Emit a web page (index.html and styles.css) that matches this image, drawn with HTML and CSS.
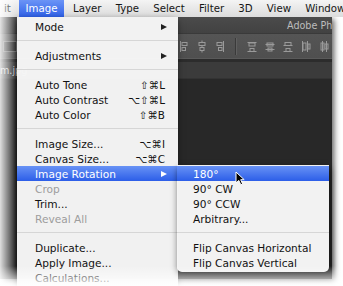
FILE: index.html
```html
<!DOCTYPE html>
<html>
<head>
<meta charset="utf-8">
<link rel="stylesheet" href="styles.css">
</head>
<body>
<div class="shot">
  <div class="menubar">
    <span class="mb-item mb-edit">it</span>
    <span class="mb-item mb-active">Image</span>
    <span class="mb-item">Layer</span>
    <span class="mb-item">Type</span>
    <span class="mb-item">Select</span>
    <span class="mb-item">Filter</span>
    <span class="mb-item">3D</span>
    <span class="mb-item">View</span>
    <span class="mb-item">Window</span>
  </div>
  <div class="app">
    <div class="titlebar"><span class="title">Adobe Photoshop CS6</span></div>
    <div class="options">
      <span class="optbox"></span>
      <div class="icons">
        <svg class="ic" viewBox="0 0 10 13"><path d="M1.5 1v11"/><rect x="3" y="2.5" width="5" height="3"/><rect x="3" y="7.5" width="3.5" height="3"/></svg>
        <svg class="ic" viewBox="0 0 10 13"><path d="M5 0.5v2M5 5.5v2M5 10.5v2"/><rect x="2" y="2.5" width="6" height="3"/><rect x="3" y="7.5" width="4" height="3"/></svg>
        <svg class="ic" viewBox="0 0 10 13"><path d="M8.5 1v11"/><rect x="2" y="2.5" width="5" height="3"/><rect x="3.5" y="7.5" width="3.5" height="3"/></svg>
        <span class="vsep"></span>
        <svg class="ic" viewBox="0 0 10 13"><path d="M0.5 2.5h9M0.5 11.5h9"/><rect x="2" y="3" width="6" height="3"/><rect x="3" y="8.5" width="4" height="3"/></svg>
        <svg class="ic" viewBox="0 0 10 13"><path d="M0.5 4.5h9M0.5 9.5h9"/><rect x="2" y="3" width="6" height="3"/><rect x="3" y="8" width="4" height="3"/></svg>
        <svg class="ic" viewBox="0 0 10 13"><path d="M0.5 5.5h9M0.5 11.5h9"/><rect x="2" y="2.5" width="6" height="3"/><rect x="3" y="8.5" width="4" height="3"/></svg>
        <svg class="ic" viewBox="0 0 10 13"><path d="M1.5 1v11M6.5 1v11"/><rect x="2" y="3" width="3" height="7"/><rect x="7" y="4" width="2" height="5"/></svg>
        <svg class="ic" viewBox="0 0 10 13"><path d="M3.5 1v11M7.5 1v11"/><rect x="2" y="3" width="3" height="7"/><rect x="6" y="4" width="3" height="5"/></svg>
      </div>
    </div>
    <div class="divider"></div>
    <div class="tabs"><span class="tab">m.jpg</span></div>
    <div class="canvas"></div>
  </div>

  <div class="menu">
    <div class="row"><span class="label">Mode</span><span class="arrow"></span></div>
    <div class="sep"></div>
    <div class="row"><span class="label">Adjustments</span><span class="arrow"></span></div>
    <div class="sep"></div>
    <div class="row"><span class="label">Auto Tone</span><span class="key">⇧⌘L</span></div>
    <div class="row"><span class="label">Auto Contrast</span><span class="key">⌥⇧⌘L</span></div>
    <div class="row"><span class="label">Auto Color</span><span class="key">⇧⌘B</span></div>
    <div class="sep"></div>
    <div class="row"><span class="label">Image Size...</span><span class="key">⌥⌘I</span></div>
    <div class="row"><span class="label">Canvas Size...</span><span class="key">⌥⌘C</span></div>
    <div class="row hl"><span class="label">Image Rotation</span><span class="arrow"></span></div>
    <div class="row dis"><span class="label">Crop</span></div>
    <div class="row"><span class="label">Trim...</span></div>
    <div class="row dis"><span class="label">Reveal All</span></div>
    <div class="sep"></div>
    <div class="row"><span class="label">Duplicate...</span></div>
    <div class="row"><span class="label">Apply Image...</span></div>
    <div class="row"><span class="label">Calculations...</span></div>
  </div>

  <div class="submenu">
    <div class="row sub hl"><span class="label">180°</span></div>
    <div class="row sub"><span class="label">90° CW</span></div>
    <div class="row sub"><span class="label">90° CCW</span></div>
    <div class="row sub"><span class="label">Arbitrary...</span></div>
    <div class="sep"></div>
    <div class="row sub"><span class="label">Flip Canvas Horizontal</span></div>
    <div class="row sub"><span class="label">Flip Canvas Vertical</span></div>
  </div>

  <svg class="cursor" viewBox="0 0 11 15"><path d="M1 1 L1 12 L3.8 9.4 L5.8 13.8 L7.6 13 L5.7 8.7 L9.2 8.7 Z"/></svg>

  <div class="fade-left"></div>
  <div class="fade-bottom"></div>
</div>
</body>
</html>
```

FILE: styles.css
```css
html, body {
  margin: 0;
  padding: 0;
  background: #ffffff;
}

.shot {
  position: relative;
  width: 343px;
  height: 286px;
  overflow: hidden;
  background: #ffffff;
  font-family: "DejaVu Sans", "Liberation Sans", sans-serif;
}

/* ---------- menu bar ---------- */
.menubar {
  display: flex;
  align-items: center;
  height: 17px;
  background: linear-gradient(#f4f4f4, #dcdcdc);
  font-size: 10.2px;
  color: #151515;
  white-space: nowrap;
  position: relative;
  z-index: 2;
}

.mb-item {
  flex-shrink: 0;
  display: flex;
  align-items: center;
  height: 17px;
  padding: 0 7.1px;
}

.mb-edit {
  width: 19px;
  box-sizing: border-box;
  padding: 0 0 0 4px;
}

.mb-active {
  width: 45px;
  box-sizing: border-box;
  justify-content: center;
  padding: 0;
  margin-right: 2px;
  color: #ffffff;
  background: linear-gradient(#6b94f6, #2f61e9);
}

/* ---------- dark application ---------- */
.app {
  width: 332px;
  height: 262px;
  display: flex;
  flex-direction: column;
  background: #292929;
  box-shadow: 2px 2px 6px rgba(0, 0, 0, 0.65);
  overflow: hidden;
}

.titlebar {
  height: 16px;
  display: flex;
  align-items: center;
  background: linear-gradient(#4b4b4b, #424242);
  border-bottom: 1px solid #3a3a3a;
}

.title {
  margin-left: 287px;
  font-size: 9.6px;
  color: #bdbdbd;
  white-space: nowrap;
}

.options {
  height: 24px;
  display: flex;
  align-items: center;
  background: linear-gradient(#555555, #4f4f4f);
}

.optbox {
  width: 12px;
  height: 9px;
  margin-left: 3px;
  border: 1px solid #777777;
  background: #3b3b3b;
}

.icons {
  display: flex;
  align-items: center;
  gap: 8px;
  margin-left: 162px;
}

.ic {
  width: 10px;
  height: 13px;
  fill: none;
  stroke: #9a9a9a;
  stroke-width: 1;
}

.vsep {
  width: 1px;
  height: 17px;
  background: #3a3a3a;
  border-right: 1px solid #606060;
  margin: 0 2px;
}

.divider {
  height: 3px;
  background: #2c2c2c;
  border-top: 1px solid #5a5a5a;
}

.tabs {
  height: 16px;
  display: flex;
  align-items: center;
  background: #3b3b3b;
  border-bottom: 1px solid #333333;
}

.tab {
  margin-left: 0;
  font-size: 9.6px;
  color: #cfcfcf;
  white-space: nowrap;
}

.canvas {
  flex: 1;
  background: #282828;
}

/* ---------- menus ---------- */
.menu {
  position: absolute;
  left: 17px;
  top: 17px;
  width: 161px;
  height: 272px;
  padding-top: 2px;
  box-sizing: border-box;
  background: rgba(246, 246, 246, 0.98);
  box-shadow: -1px 3px 7px rgba(0, 0, 0, 0.55);
  z-index: 3;
}

.submenu {
  position: absolute;
  left: 177px;
  top: 165px;
  width: 152px;
  padding: 1px 0 2px;
  background: rgba(245, 245, 245, 0.99);
  border-radius: 0 0 5px 5px;
  box-shadow: 1px 3px 7px rgba(0, 0, 0, 0.6);
  z-index: 4;
}

.row {
  display: flex;
  align-items: center;
  height: 15px;
  padding: 0 13px 0 18px;
  font-size: 10.6px;
  color: #111111;
  white-space: nowrap;
}

.row.sub {
  padding-left: 16px;
}

.label {
  flex: 1;
}

.key {
  font-size: 10.4px;
}

.arrow {
  width: 0;
  height: 0;
  margin-right: -2px;
  border-left: 6px solid #222222;
  border-top: 3.5px solid transparent;
  border-bottom: 3.5px solid transparent;
}

.row.hl {
  color: #ffffff;
  background: linear-gradient(#6892f5, #2c5ee8);
}

.row.hl .arrow {
  border-left-color: #ffffff;
}

.row.dis {
  color: #9d9d9d;
}

.sep {
  height: 1px;
  margin: 6px 0 7px;
  background: #d6d6d6;
}

/* ---------- cursor ---------- */
.cursor {
  position: absolute;
  left: 235px;
  top: 171px;
  width: 11px;
  height: 15px;
  z-index: 5;
  fill: #000000;
  stroke: #ffffff;
  stroke-width: 1;
}

/* ---------- photo fades ---------- */
.fade-left {
  position: absolute;
  left: 0;
  top: 0;
  width: 16px;
  height: 286px;
  background: linear-gradient(to right, rgba(255, 255, 255, 0.85), rgba(255, 255, 255, 0));
  z-index: 6;
}

.fade-bottom {
  position: absolute;
  left: 0;
  bottom: 0;
  width: 343px;
  height: 20px;
  background: linear-gradient(rgba(255, 255, 255, 0), rgba(255, 255, 255, 0.92));
  z-index: 6;
}
```
